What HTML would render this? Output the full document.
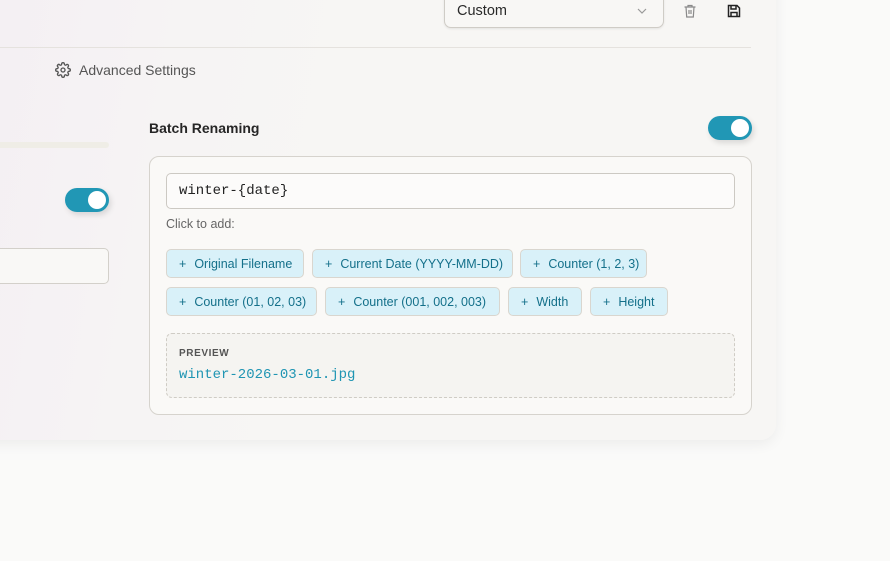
<!DOCTYPE html>
<html><head><meta charset="utf-8"><style>
*{box-sizing:border-box;margin:0;padding:0}
body{width:890px;height:561px;overflow:hidden;background:#fafaf9;font-family:"Liberation Sans",sans-serif;position:relative}
.panel{position:absolute;left:-20px;top:-20px;width:796px;height:460px;border-radius:0 0 16px 0;background:linear-gradient(100deg,#f4eff3 0%,#f6f4f4 25%,#f7f6f4 45%);box-shadow:0 4px 14px rgba(0,0,0,.06)}
.abs{position:absolute}
.mono{font-family:"Liberation Mono","DejaVu Sans Mono",monospace}
.toggle{position:absolute;width:44px;height:24px;border-radius:12px;background:#2197b5;box-shadow:2px 3px 6px rgba(0,0,0,.12)}
.toggle::after{content:"";position:absolute;right:3px;top:3px;width:18px;height:18px;border-radius:50%;background:#fff}
.chip{position:absolute;height:29px;border:1px solid #d9d6cf;border-radius:5px;background:#d9f1f9;color:#14708a;font-size:12.5px;line-height:29px;padding-left:12px;white-space:nowrap}
.chip b{font-weight:normal;margin-right:8px}
</style></head><body>
<div class="panel"></div>
<div class="abs" style="left:0;top:47px;width:751px;height:1px;background:#e5e2de"></div>
<div class="abs" style="left:444px;top:-8px;width:220px;height:36px;border:1px solid #cfccc6;border-radius:7px;background:#f8f7f5;box-shadow:0 1px 2px rgba(0,0,0,.08)"></div>
<div class="abs" style="left:457px;top:3px;font-size:14.5px;color:#2a2a2a">Custom</div>
<svg class="abs" style="left:636px;top:6px" width="12" height="10" viewBox="0 0 12 10"><path d="M2 3l4 4 4-4" fill="none" stroke="#999" stroke-width="1.2"/></svg>
<svg class="abs" style="left:682px;top:3px" width="16" height="16" viewBox="0 0 16 16" fill="none" stroke="#8a8a8a" stroke-width="1.2"><path d="M2.5 4h11M6 4V2.5h4V4M4 4l.7 10h6.6L12 4M7 7v4M9 7v4"/></svg>
<svg class="abs" style="left:726px;top:3px" width="16" height="16" viewBox="0 0 16 16" fill="none" stroke="#222" stroke-width="1.5"><path d="M2.5 2.5h8.5l2.5 2.5v8.5h-11zM5 2.5v3.5h5V2.5M5 13.5V9.5h6v4"/></svg>
<svg class="abs" style="left:55px;top:62px" width="16" height="16" viewBox="0 0 24 24" fill="none" stroke="#555" stroke-width="2"><circle cx="12" cy="12" r="3"/><path d="M19.4 15a1.65 1.65 0 0 0 .33 1.82l.06.06a2 2 0 1 1-2.830 2.83l-.06-.06a1.65 1.65 0 0 0-1.82-.33 1.65 1.65 0 0 0-1 1.51V21a2 2 0 1 1-4 0v-.09A1.65 1.65 0 0 0 9 19.4a1.65 1.65 0 0 0-1.82.33l-.06.06a2 2 0 1 1-2.83-2.83l.06-.06A1.65 1.65 0 0 0 4.68 15a1.65 1.65 0 0 0-1.51-1H3a2 2 0 1 1 0-4h.09A1.65 1.65 0 0 0 4.6 9a1.65 1.65 0 0 0-.33-1.82l-.06-.06a2 2 0 1 1 2.83-2.83l.06.06A1.65 1.65 0 0 0 9 4.68 1.65 1.65 0 0 0 10 3.17V3a2 2 0 1 1 4 0v.09a1.65 1.65 0 0 0 1 1.51 1.65 1.65 0 0 0 1.82-.33l.06-.06a2 2 0 1 1 2.83 2.83l-.06.06A1.65 1.65 0 0 0 19.4 9a1.65 1.65 0 0 0 1.51 1H21a2 2 0 1 1 0 4h-.09a1.65 1.65 0 0 0-1.51 1z"/></svg>
<div class="abs" style="left:79px;top:62px;font-size:14px;color:#555">Advanced Settings</div>
<div class="abs" style="left:0;top:142px;width:109px;height:6px;border-radius:0 3px 3px 0;background:#efede6"></div>
<div class="toggle" style="left:65px;top:188px"></div>
<div class="abs" style="left:-10px;top:248px;width:119px;height:36px;border:1px solid #d3d0ca;border-radius:5px;background:#f9f8f6"></div>
<div class="abs" style="left:149px;top:120px;font-size:14px;color:#262626;font-weight:bold">Batch Renaming</div>
<div class="toggle" style="left:708px;top:116px"></div>
<div class="abs" style="left:149px;top:156px;width:603px;height:259px;border:1px solid #d6d3cd;border-radius:10px;background:#faf9f7"></div>
<div class="abs mono" style="left:166px;top:173px;width:569px;height:36px;border:1px solid #ccc9c3;border-radius:5px;background:#fcfbfa;padding-left:12px;line-height:34px;font-size:14px;color:#222">winter-{date}</div>
<div class="abs" style="left:166px;top:217px;font-size:12.5px;color:#666">Click to add:</div>
<div class="chip" style="left:166px;top:249px;width:138px"><b>+</b>Original Filename</div>
<div class="chip" style="left:312px;top:249px;width:201px"><b>+</b>Current Date (YYYY-MM-DD)</div>
<div class="chip" style="left:520px;top:249px;width:127px"><b>+</b>Counter (1, 2, 3)</div>
<div class="chip" style="left:166px;top:287px;width:151px"><b>+</b>Counter (01, 02, 03)</div>
<div class="chip" style="left:325px;top:287px;width:175px"><b>+</b>Counter (001, 002, 003)</div>
<div class="chip" style="left:508px;top:287px;width:74px"><b>+</b>Width</div>
<div class="chip" style="left:590px;top:287px;width:78px"><b>+</b>Height</div>
<div class="abs" style="left:166px;top:333px;width:569px;height:65px;border:1px dashed #cfccc5;border-radius:6px;background:#f5f4f1"></div>
<div class="abs" style="left:179px;top:348px;font-size:10px;font-weight:bold;letter-spacing:.6px;color:#555">PREVIEW</div>
<div class="abs mono" style="left:179px;top:367px;font-size:14px;color:#1f95b3">winter-2026-03-01.jpg</div>
</body></html>
